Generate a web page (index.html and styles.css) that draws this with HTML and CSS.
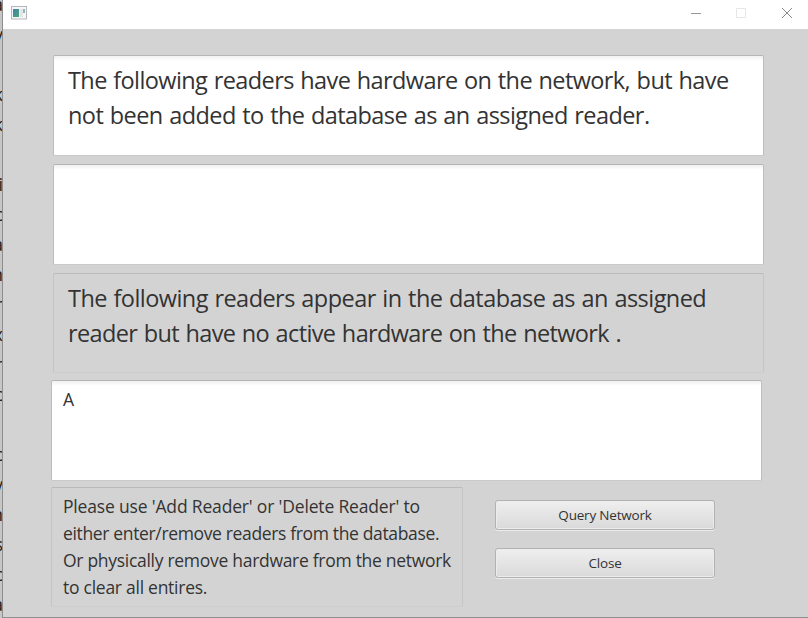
FILE: index.html
```html
<!DOCTYPE html>
<html lang="en">
<head>
<meta charset="utf-8">
<title>Reader network query</title>
<link rel="stylesheet" href="styles.css">
</head>
<body>
<div class="desktop">
  <div class="backdrop" aria-hidden="true">
    <span>a</span><span>y</span><span></span><span>k</span><span>k</span><span></span><span>i</span><span>c</span><span>a</span><span>n</span><span>r</span><span>x</span><span>r</span><span>c</span><span></span><span>c</span><span>v</span><span>n</span><span>s</span><span>c</span><span>a</span>
  </div>
  <div class="window">
    <header class="titlebar">
      <svg class="app-icon" width="16" height="14" viewBox="0 0 16 14">
        <defs><linearGradient id="pane" x1="0" y1="0" x2="1" y2="1"><stop offset="0" stop-color="#477fa8"/><stop offset="1" stop-color="#48a77b"/></linearGradient></defs>
        <rect x=".5" y=".5" width="15" height="12.5" fill="#f5f6f7" stroke="#b4b8bb"/>
        <rect x="2" y="3" width="6" height="8" fill="url(#pane)"/>
        <rect x="9" y="3" width="3" height="8" fill="#e3e5e7"/>
        <rect x="12" y="3" width="2" height="4" fill="#93b5b8"/>
      </svg>
      <div class="controls">
        <svg width="10" height="10" viewBox="0 0 10 10"><path d="M0 5.5h10" stroke="#999"/></svg>
        <svg width="10" height="10" viewBox="0 0 10 10"><path d="M.5.5h9v9h-9z" fill="none" stroke="#e6e6e6"/></svg>
        <svg width="10" height="10" viewBox="0 0 10 10"><path d="M0 0l10 10M10 0L0 10" stroke="#888"/></svg>
      </div>
    </header>
    <main class="content">
      <section class="area large">
        <p class="l1">The following readers have hardware on the network, but have</p>
        <p class="l2">not been added to the database as an assigned reader.</p>
      </section>
      <section class="area"></section>
      <section class="area large plain">
        <p class="l3">The following readers appear in the database as an assigned</p>
        <p class="l4">reader but have no active hardware on the network .</p>
      </section>
      <section class="area small shifted"><p>A</p></section>
      <div class="footer">
        <section class="area small plain note">
          <p class="s1">Please use 'Add Reader' or 'Delete Reader' to</p>
          <p class="s2">either enter/remove readers from the database.</p>
          <p class="s3">Or physically remove hardware from the network</p>
          <p class="s4">to clear all entires.</p>
        </section>
        <div class="actions">
          <button type="button">Query Network</button>
          <button type="button">Close</button>
        </div>
      </div>
    </main>
  </div>
</div>
</body>
</html>
```
FILE: styles.css
```css
* { box-sizing: border-box; }
body { margin: 0; font-family: "Open Sans", "Noto Sans", sans-serif; color: #333; }
p { margin: 0; white-space: nowrap; }
.desktop { display: flex; width: 808px; height: 618px; overflow: hidden; background: #c6c6c6; }
.backdrop { width: 2px; height: 629px; margin-top: -11px; overflow: hidden; flex: none; }
.backdrop span { display: flex; justify-content: flex-end; width: 3px; height: 30px; font-size: 18px; line-height: 30px; color: #222; }
.window { width: 806px; height: 618px; background: #d3d3d3; border-left: 1px solid #8e8e8e; border-bottom: 1px solid #8e8e8e; }
.titlebar { height: 29px; background: #fff; display: flex; justify-content: space-between; padding: 6px 16px 0 8px; }
.controls { display: flex; gap: 35px; padding-top: 2px; }
.controls svg:last-child { margin-left: 1px; }
.controls svg, .app-icon { display: block; }
.content { padding: 26px 0 0 50px; }
.area { width: 711px; height: 101px; margin-bottom: 8px; border: 1px solid; border-color: #b5b5b5 #bdbdbd #cacaca; border-radius: 2px; background: linear-gradient(#f0f0f0, #fff 5px); }
.plain { background: none; border-color: #bababa #c4c4c4 #cdcdcd; }
.large { padding: 7px 14px; font-size: 23.5px; line-height: 35px; word-spacing: 1px; }
.large.plain { height: 100px; margin-bottom: 9px; }
.small { padding: 5px 11px; font-size: 17.5px; line-height: 27px; }
.shifted { margin: -2px 0 6px -2px; }
.footer { display: flex; margin-left: -2px; }
.note { width: 412px; height: 120px; margin: 0; }
.actions { display: flex; flex-direction: column; gap: 18px; padding: 13px 0 0 32px; }
button { width: 220px; height: 30px; padding: 0; border: 1px solid #b2b2b2; border-radius: 3px; background: linear-gradient(#efefef, #d9d9d9); box-shadow: inset 0 0 0 1px #ececec, 0 1px 0 #ececec; font: 13.5px "Open Sans", sans-serif; letter-spacing: -.2px; color: #333; }
.l1 { letter-spacing: -.6px; }
.l2 { letter-spacing: -.57px; }
.l3 { letter-spacing: -.55px; }
.l4 { letter-spacing: -.63px; }
.s1 { letter-spacing: -.17px; }
.s2 { letter-spacing: -.35px; }
.s3 { letter-spacing: -.29px; }
.s4 { letter-spacing: -.26px; }
```
